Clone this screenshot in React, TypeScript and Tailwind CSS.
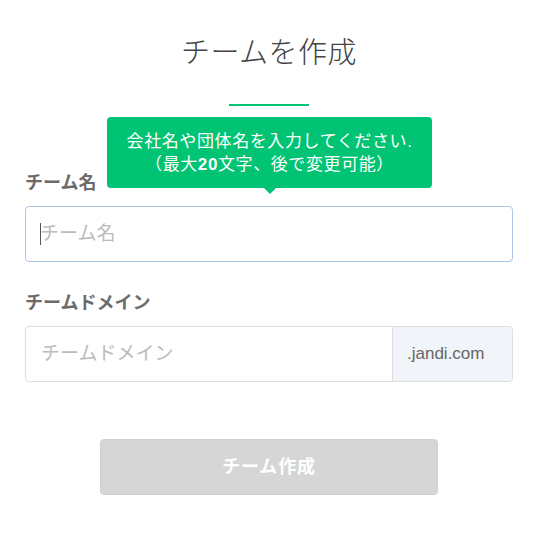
import { useState } from 'react';

const FONT = 'font-["Liberation_Sans","Noto_Sans_CJK_JP",sans-serif]';

export default function App() {
  const [name, setName] = useState('');
  const [domain, setDomain] = useState('');
  const disabled = !name || !domain;

  return (
    <div className={`w-[538px] px-[25px] bg-white ${FONT}`}>
      <h1 className="mt-[33px] h-[40px] leading-[40px] text-center text-[29px] font-light text-[#444] tracking-[0.5px]">
        チームを作成
      </h1>
      <div className="mx-auto mt-[31px] h-[2px] w-[80px] bg-[#00c473]" />

      <div className="relative mt-[65px]">
        {/* tooltip */}
        <div className="absolute left-[82px] top-[-54px] w-[325px]">
          <div className="flex h-[71px] flex-col items-center justify-center rounded-[4px] bg-[#00c473] text-center text-[17px] leading-[23px] tracking-[0.6px] text-white">
            <p>会社名や団体名を入力してください.</p>
            <p>
              （最大<span className="font-bold">20</span>文字、後で変更可能）
            </p>
          </div>
          <div className="mx-auto h-0 w-0 border-x-[6px] border-t-[6px] border-x-transparent border-t-[#00c473]" />
        </div>

        <label className="block h-[24px] leading-[24px] text-[18px] font-bold text-[#6b6b6b]">チーム名</label>
        <div className="relative mt-[11px]">
          <input
            value={name}
            onChange={(e) => setName(e.target.value)}
            placeholder="チーム名"
            className="block h-[56px] w-full rounded-[4px] border border-[#a9c6e4] pl-[14px] text-[19px] text-[#333] outline-none placeholder:text-[#bbb]"
          />
          {/* caret of the focused field */}
          {!name && <span className="pointer-events-none absolute left-[15px] top-[17px] h-[22px] w-px bg-[#555]" />}
        </div>
      </div>

      <label className="mt-[29px] block h-[24px] leading-[24px] text-[18px] font-bold text-[#6b6b6b]">
        チームドメイン
      </label>
      <div className="mt-[11px] flex h-[56px] w-full overflow-hidden rounded-[4px] border border-[#dddddd]">
        <input
          value={domain}
          onChange={(e) => setDomain(e.target.value)}
          placeholder="チームドメイン"
          className="min-w-0 flex-1 pl-[15px] text-[19px] text-[#333] outline-none placeholder:text-[#bbb]"
        />
        <div className="flex w-[120px] items-center border-l border-[#dddddd] bg-[#f1f4f8] pl-[14px] text-[17px] text-[#666]">
          .jandi.com
        </div>
      </div>

      <button
        disabled={disabled}
        className="mx-auto mt-[57px] block h-[56px] w-[338px] rounded-[4px] border border-[#d0d0d0] bg-[#d6d6d6] text-[18px] font-bold tracking-[0.8px] text-white"
      >
        チーム作成
      </button>
      <div className="h-[40px]" />
    </div>
  );
}
